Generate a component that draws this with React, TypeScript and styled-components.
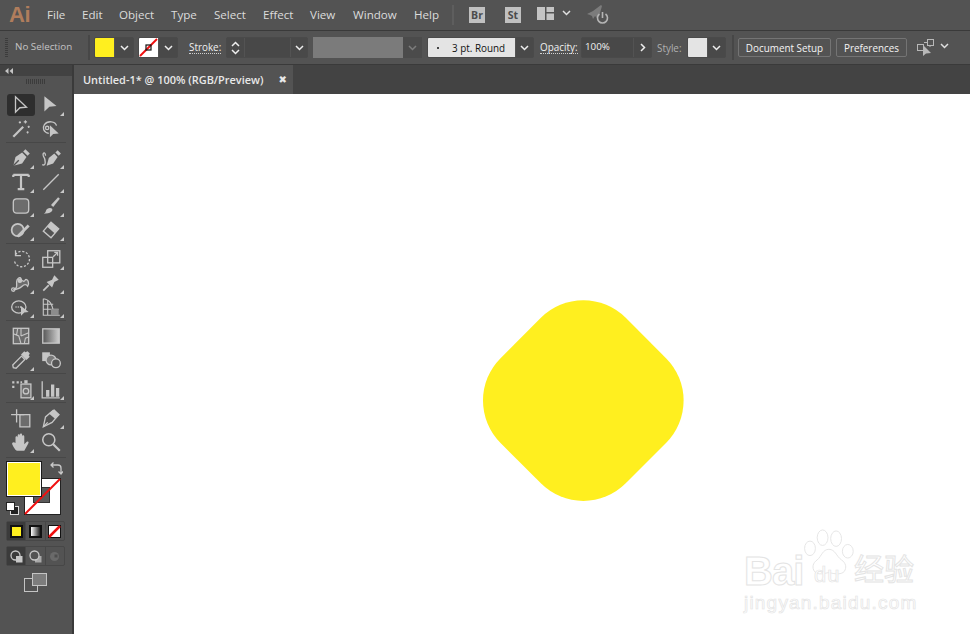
import React from "react";
import styled, { createGlobalStyle } from "styled-components";

const Global = createGlobalStyle`
  html, body { margin: 0; padding: 0; background: #535353; }
  #root { width: 970px; height: 634px; overflow: hidden; }
`;

const Shell = styled.div`
  width: 970px; height: 634px; display: flex; flex-direction: column;
  background: #535353; overflow: hidden;
  font-family: "Open Sans", "Liberation Sans", sans-serif;
`;

/* ---------- menu bar ---------- */
const MenuBar = styled.div`
  height: 30px; flex: none; display: flex; align-items: center; position: relative;
  border-bottom: 1px solid #3a3a3a; background: #535353;
`;
const Logo = styled.div`
  width: 47px; padding-left: 9px; box-sizing: border-box; color: #b07d5c;
  font: 700 22px "Liberation Sans", sans-serif; letter-spacing: -0.5px; line-height: 30px;
`;
const MenuItem = styled.span<{ $w: number }>`
  width: ${p => p.$w}px; flex: none; color: #dcdcdc; font-size: 11.6px; white-space: nowrap; margin-top: -2px;
`;
const MenuDivider = styled.div`
  width: 2px; height: 20px; background: #5e5e5e; margin: 0 15px 0 1px;
`;
const AppBadge = styled.div<{ $mr: number }>`
  width: 16px; height: 16px; margin-right: ${p => p.$mr}px; background: #c0c0c0; color: #4c4c4c;
  display: flex; align-items: center; justify-content: center;
  font: 700 10.5px "Open Sans", sans-serif;
`;

/* ---------- option bar ---------- */
const OptionBar = styled.div`
  height: 33px; flex: none; display: flex; align-items: center; position: relative;
  border-bottom: 1px solid #3a3a3a; background: #535353; box-sizing: content-box;
`;
const Grip = styled.div`
  width: 3px; height: 19px; margin: 0 7px 0 5px;
  background: repeating-linear-gradient(to bottom, #3c3c3c 0 1px, transparent 1px 2px);
`;
const NoSel = styled.span`
  width: 73px; color: #c4c4c4; font-size: 9.8px; font-weight: 400; white-space: nowrap; margin-top: -3px;
`;
const VDivider = styled.div<{ $ml?: number; $mr?: number }>`
  width: 2px; height: 25px; background: #474747;
  margin: 0 ${p => p.$mr ?? 4}px 0 ${p => p.$ml ?? 0}px; flex: none;
`;
const Group = styled.div<{ $ml?: number }>`
  height: 21px; display: flex; flex: none; box-sizing: border-box; overflow: hidden;
  border: 1px solid #4a4a4a; border-radius: 2px; margin-left: ${p => p.$ml ?? 0}px; background: #494949;
`;
const Swatch = styled.div<{ $c: string }>`
  width: 19px; height: 19px; background: ${p => p.$c}; flex: none; position: relative;
  display: flex; align-items: center; justify-content: center;
`;
const Caret = styled.div<{ $w?: number }>`
  width: ${p => p.$w ?? 19}px; flex: none; display: flex; align-items: center; justify-content: center;
  border-left: 1px solid #535353; box-sizing: border-box;
`;
const LabelSlot = styled.div<{ $ml: number; $w: number }>`
  margin-left: ${p => p.$ml}px; width: ${p => p.$w}px; flex: none; display: flex;
`;
const Label = styled.span<{ $dotted?: boolean; $dim?: boolean }>`
  font-size: 9.9px; font-weight: 400;
  color: ${p => p.$dim ? "#b0b0b0" : "#f0f0f0"}; white-space: nowrap; line-height: 12px;
  border-bottom: ${p => p.$dotted ? "1px dotted #d0d0d0" : "none"};
`;
const Spinner = styled.div`
  width: 18px; display: flex; flex-direction: column; align-items: center; justify-content: center;
  gap: 2px; border-right: 1px solid #535353; box-sizing: border-box; flex: none;
`;
const DarkField = styled.div<{ $w: number }>`
  width: ${p => p.$w}px; background: #484848; flex: none; color: #f0f0f0;
  font-size: 9.8px; padding-left: 3px; box-sizing: border-box; line-height: 18px;
`;
const ProfileBar = styled.div`
  width: 90px; height: 21px; background: #7b7b7b; flex: none; margin-left: 5px;
`;
const ProfileCaret = styled.div`
  width: 19px; height: 21px; background: #4b4b4b; display: flex; align-items: center; justify-content: center;
  flex: none; margin-right: 5px;
  & > svg { opacity: 0.3; }
`;
const BrushBox = styled.div`
  width: 87px; height: 19px; background: #e4e4e4; color: #111; font-size: 9.9px; font-weight: 400;
  display: flex; align-items: center; box-sizing: border-box; padding-left: 9px; flex: none; white-space: nowrap;
`;
const Dot = styled.span`
  width: 2px; height: 2px; border-radius: 50%; background: #111; margin-right: 13px; flex: none;
`;
const Btn = styled.div<{ $w: number; $ml: number }>`
  width: ${p => p.$w}px; height: 19px; margin-left: ${p => p.$ml}px; flex: none; box-sizing: border-box;
  border: 1px solid #747474; border-radius: 2px; color: #f4f4f4; font-size: 9.9px; font-weight: 400;
  display: flex; align-items: center; justify-content: center; white-space: nowrap;
`;

/* ---------- work area ---------- */
const Work = styled.div`
  flex: 1; display: flex; min-height: 0;
`;
const Panel = styled.div`
  width: 72px; flex: none; display: flex; flex-direction: column; background: #535353;
`;
const PanelHead = styled.div`
  height: 11px; background: #424242; flex: none; display: flex; align-items: center; padding-left: 5px;
`;
const PanelGrip = styled.div`
  height: 5px; width: 19px; margin: 3px 0 9px 26px; flex: none;
  background: repeating-linear-gradient(to right, #3c3c3c 0 1px, transparent 1px 2px);
`;
const PanelGap = styled.div`
  width: 2px; background: #3a3a3a; flex: none;
`;
const ToolRow = styled.div`
  display: grid; grid-template-columns: 30px 30px; padding-left: 6px; height: 24px; flex: none;
`;
const Tool = styled.div<{ $active?: boolean }>`
  position: relative; display: flex; align-items: center; justify-content: center;
  background: ${p => p.$active ? "#2e2e2e" : "transparent"}; border-radius: 3px; height: 22px; width: 28px; margin: 1px 0 0 1px;
`;
const Corner = styled.span`
  position: absolute; right: 1px; bottom: 0; width: 0; height: 0;
  border-style: solid; border-width: 0 0 4px 4px; border-color: transparent transparent #c8c8c8 transparent;
`;
const Rule = styled.div<{ $mt?: number }>`
  height: 1px; background: #474747; margin: ${p => p.$mt ?? 1}px 6px 3px 6px; flex: none;
`;

const ColorArea = styled.div`
  position: relative; height: 54px; margin: 0; flex: none;
`;
const FillBig = styled.div`
  position: absolute; left: 6px; top: 0; width: 36px; height: 36px; box-sizing: border-box;
  background: #ffef1f; border: 1px solid #1c1c1c; box-shadow: inset 0 0 0 1px #fff; z-index: 2;
`;
const StrokeBig = styled.svg`
  position: absolute; left: 24px; top: 17px; width: 37px; height: 37px;
`;
const SwapIcon = styled.svg`
  position: absolute; left: 50px; top: 1px; width: 13px; height: 14px;
`;
const DefaultIcon = styled.svg`
  position: absolute; left: 6px; top: 41px; width: 13px; height: 13px;
`;
const ModeRow = styled.div<{ $mt: number }>`
  display: flex; margin: ${p => p.$mt}px 0 0 6px; width: 59px; height: 20px; flex: none; box-sizing: border-box;
  border: 1px solid #474747; border-radius: 2px;
`;
const ModeCell = styled.div<{ $active?: boolean }>`
  flex: 1; display: flex; align-items: center; justify-content: center;
  background: ${p => p.$active ? "#3b3b3b" : "transparent"};
  & + & { border-left: 1px solid #474747; }
`;
const ModeSwatch = styled.div<{ $bg: string }>`
  width: 13px; height: 13px; box-sizing: border-box; border: 2px solid #111; background: ${p => p.$bg};
`;
const ScreenIcon = styled.svg`
  margin: 7px 0 0 24px; width: 24px; height: 19px; flex: none;
`;

const Doc = styled.div`
  flex: 1; display: flex; flex-direction: column; min-width: 0; background: #434343;
`;
const TabBar = styled.div`
  height: 29px; flex: none; display: flex; background: #434343;
`;
const Tab = styled.div`
  width: 219px; background: #535353; display: flex; align-items: center; justify-content: space-between;
  padding: 0 6px 0 9px; box-sizing: border-box; color: #e8e8e8; font-size: 10.95px; font-weight: 600; white-space: nowrap;
`;
const Close = styled.span`
  color: #e8e8e8; font: 700 10px "DejaVu Sans", sans-serif; margin-top: -1px;
`;
const Canvas = styled.div`
  flex: 1; background: #fff; position: relative; overflow: hidden;
`;
const Shape = styled.div`
  position: absolute; left: 420.7px; top: 217.7px; width: 176.6px; height: 176.6px;
  background: #ffef1f; border-radius: 60px; transform: rotate(45deg);
`;
const Mark = styled.div`
  position: absolute; left: 670px; top: 425px; width: 190px; height: 110px;
  color: #fff; -webkit-text-stroke: 1px #e4e4e4; font-family: "Liberation Sans", "Noto Sans CJK SC", sans-serif;
`;
const MarkBai = styled.span`
  position: absolute; left: 0; top: 32px; font-size: 40px; font-weight: 700; letter-spacing: -1px; line-height: 40px;
`;
const MarkJing = styled.span`
  position: absolute; left: 0; top: 73px; font-size: 19px; line-height: 22px; white-space: nowrap; letter-spacing: 1.2px; -webkit-text-stroke: 0.7px #e4e4e4;
`;
const MarkCn = styled.span`
  position: absolute; left: 110px; top: 35px; font-size: 30px; line-height: 32px; white-space: nowrap;
`;
const MarkDu = styled.span`
  position: absolute; left: 70px; top: 46px; font-size: 22px; line-height: 20px; letter-spacing: 1px; -webkit-text-stroke: 0.7px #e4e4e4;
`;
const MarkPaw = styled.svg`
  position: absolute; left: 57px; top: 10px; width: 54px; height: 58px;
`;

/* ---------- icons ---------- */
const G = "#c6c6c6";
const Ico: React.FC<{ children: React.ReactNode }> = ({ children }) => (
  <svg width="22" height="22" viewBox="0 0 20 20" fill="none" stroke={G} strokeWidth="1.2">{children}</svg>
);
const Chev = () => (
  <svg width="9" height="6" viewBox="0 0 9 6" fill="none" stroke="#eeeeee" strokeWidth="1.5"><path d="M1 1l3.5 3.5L8 1" /></svg>
);
const ChevUp = () => (
  <svg width="9" height="6" viewBox="0 0 9 6" fill="none" stroke="#eeeeee" strokeWidth="1.5"><path d="M1 5l3.5-3.5L8 5" /></svg>
);
const ChevRight = () => (
  <svg width="6" height="9" viewBox="0 0 6 9" fill="none" stroke="#eeeeee" strokeWidth="1.5"><path d="M1 1l3.5 3.5L1 8" /></svg>
);

const tools: React.ReactNode[][] = [
  [
    <Ico><path d="M5 2.5v14l4-4 6-.5z" /></Ico>,
    <Ico><path d="M4 2v14l4.5-4.5 6.5-.5z" fill={G} stroke="none" /></Ico>,
  ],
  [
    <Ico><path d="M3 17l9-9" strokeWidth="2" /><path d="M14 2v3M12.5 3.5h3M17 7v2M16 8h2M9 3v2M8 4h2M16 12v2M15 13h2" strokeWidth="1" /></Ico>,
    <Ico><path d="M8 14c-5-1-6-5-4-8 3-4 10-3 11 1" /><circle cx="6.500" cy="9" r="1.500" /><path d="M9 6.500v11l3-3 5-.5z" fill={G} stroke="none" /></Ico>,
  ],
];
const tools2: React.ReactNode[][] = [
  [
    <Ico><path d="M3 17l2-8 6-4 4 4-4 6z" fill={G} stroke="none" /><path d="M12 4l2-2 4 4-2 2z" fill={G} stroke="none" /><path d="M3 17l5-5" stroke="#535353" /></Ico>,
    <Ico><path d="M2 16c4 2 3-5 1-8-1-3 2-4 2 0" /><path d="M6 17l2-7 5-4 3 3-4 6z" fill={G} stroke="none" /><path d="M14 5l2-2 3 3-2 2z" fill={G} stroke="none" /></Ico>,
  ],
  [
    <Ico><path d="M3 3.500h14M10 3.500v13M7 16.500h6M3 3.500v2M17 3.500v2" strokeWidth="2" /></Ico>,
    <Ico><path d="M3 17L17 3" /></Ico>,
  ],
  [
    <Ico><rect x="3" y="3.500" width="14" height="13" rx="3" fill="#6c6c6c" /></Ico>,
    <Ico><path d="M10 9L16.500 2l1.500 1.500-6 7.500z" fill={G} stroke="none" /><path d="M3 17c1 0 2-1 2.500-3 .5-2 4-3 5.500-1.500 1 2-1 4.500-8 4.500z" fill={G} stroke="none" /></Ico>,
  ],
  [
    <Ico><circle cx="7" cy="10" r="5.500" fill="#6c6c6c" strokeWidth="1.600" /><path d="M7 16L17 6" strokeWidth="2.600" /></Ico>,
    <Ico><path d="M3 11l7-8 7 6-7 8z" stroke={G} /><path d="M6.500 7l7 6.200 3.500-4-7-6.200z" fill={G} stroke="none" /></Ico>,
  ],
];
const tools3: React.ReactNode[][] = [
  [
    <Ico><path d="M5 6a7 7 0 1 1-1 6" strokeDasharray="2 1.500" /><path d="M5 2v5h5" /></Ico>,
    <Ico><rect x="2.500" y="8.500" width="9" height="9" /><rect x="7" y="2.500" width="11" height="11" /><path d="M12 8l4-4M13 4h3v3" /></Ico>,
  ],
  [
    <Ico><path d="M3 16c4-1 3-4 3-7 0-3 3-5 4-3 1 3 3 3 4 1 2-1 4 3 2 6-1-2-3-2-5 0-2 2-4 3-8 3z" fill="#6c6c6c" /><circle cx="3" cy="16" r="1.500" /><circle cx="9" cy="8" r="1.500" fill={G} /></Ico>,
    <Ico><path d="M3 17l5-5" strokeWidth="1.500" /><path d="M6 9l5-2 2-4 4 4-4 2-2 5z" fill={G} stroke="none" /></Ico>,
  ],
  [
    <Ico><ellipse cx="8" cy="10" rx="6.500" ry="5.500" /><path d="M5 10h6" strokeDasharray="1 1" /><path d="M10 9v9l3-3 4-.5z" fill={G} stroke="none" /></Ico>,
    <Ico><path d="M3 2.500v15h15M3 2.500c6 1 8 4 10 15M3 7.500l9 0M3 12h14M7 4v13" strokeWidth="1" /><path d="M10 12h7v5.500h-7z" fill="#8c8c8c" stroke="none" /></Ico>,
  ],
];
const tools4: React.ReactNode[][] = [
  [
    <Ico><rect x="3" y="3" width="14" height="14" fill="#6c6c6c" /><path d="M3 8l5 2 2 7M17 7l-7 3M10 3v7M7 3l-1 6M13 17l1-5 3-1" strokeWidth="1" /></Ico>,
    <Ico><defs><linearGradient id="gr"><stop offset="0" stopColor="#555" /><stop offset="1" stopColor="#d0d0d0" /></linearGradient></defs><rect x="2.500" y="3.500" width="15" height="13" fill="url(#gr)" stroke={G} /></Ico>,
  ],
  [
    <Ico><path d="M3 17l-.5-2.500 8-8 3 3-8 8z" /><path d="M10 5l3-3 1 1 2-1 2 2-1 2 1 1-3 3z" fill={G} stroke="none" /></Ico>,
    <Ico><path d="M2 3h7v8H2z" fill={G} stroke="none" /><circle cx="10" cy="10" r="4.500" fill="#7a7a7a" /><circle cx="14.500" cy="13" r="4" fill="#535353" /></Ico>,
  ],
];
const tools5: React.ReactNode[][] = [
  [
    <Ico><path d="M2 3h2v2H2zM6 3h2v2H6zM2 7h2v2H2zM9.500 3h1.500v1.500H9.500z" fill={G} stroke="none" /><path d="M13 2h3v3h-3z" fill={G} stroke="none" /><rect x="10" y="5.500" width="9" height="12.500" fill="#6c6c6c" /><circle cx="14.500" cy="12" r="2.500" /></Ico>,
    <Ico><path d="M2 3v15h16" /><path d="M5.500 11h3v6h-3zM10 6h3v11h-3zM14.500 9h3v8h-3z" fill={G} stroke="none" /></Ico>,
  ],
];
const tools6: React.ReactNode[][] = [
  [
    <Ico><path d="M9 7h9v11H9z" fill="#6c6c6c" stroke={G} /><path d="M1 7h12M6 2v12" /></Ico>,
    <Ico><path d="M3 18l2-9 7-6 5 4-6 7z" /><path d="M8 6l5-4 5 5-4 4z" fill={G} stroke="none" /><path d="M3 18l4-4" /></Ico>,
  ],
  [
    <Ico><path d="M5 11V6c0-1.500 2-1.500 2 0V4c0-1.500 2-1.500 2 0v-.500c0-1.500 2-1.500 2 0V5c0-1.500 2-1.500 2 0v7l2-2c1.500-1 2.500 0 1.500 1.500L13 18H7c-2 0-3.500-3-5-6-.5-1.500 1.500-2.500 3-1z" fill={G} stroke="none" /></Ico>,
    <Ico><circle cx="8" cy="8" r="5.500" strokeWidth="1.400" /><path d="M12 12l6 6" strokeWidth="2" /></Ico>,
  ],
];

const Rows: React.FC<{ rows: React.ReactNode[][]; first?: boolean; noCorner?: string[] }> = ({ rows, first, noCorner }) => (
  <>
    {rows.map((row, i) => (
      <ToolRow key={i}>
        {row.map((icon, j) => (
          <Tool key={j} $active={!!first && i === 0 && j === 0}>
            {icon}
            {!(noCorner && noCorner.includes(`${i}-${j}`)) && <Corner />}
          </Tool>
        ))}
      </ToolRow>
    ))}
  </>
);

const menu: [string, number][] = [
  ["File", 35], ["Edit", 37], ["Object", 52], ["Type", 43], ["Select", 49], ["Effect", 47],
  ["View", 43], ["Window", 61], ["Help", 37],
];

export default function App() {
  return (
    <Shell>
      <Global />
      <MenuBar>
        <Logo>Ai</Logo>
        {menu.map(([t, w]) => <MenuItem key={t} $w={w}>{t}</MenuItem>)}
        <MenuDivider />
        <AppBadge $mr={20}>Br</AppBadge>
        <AppBadge $mr={16}>St</AppBadge>
        <svg width="17" height="13" viewBox="0 0 17 13" fill="#c4c4c4" style={{ marginTop: -4 }}>
          <path d="M0 0h8v13H0zM9.500 0H17v5H9.500zM9.500 6.500H17V13H9.500z" />
        </svg>
        <svg width="9" height="6" viewBox="0 0 9 6" fill="none" stroke="#e0e0e0" strokeWidth="1.500" style={{ margin: "-4px 16px 0 8px" }}><path d="M1 1l3.500 3.500L8 1" /></svg>
        <svg width="23" height="20" viewBox="0 0 23 20" fill="none">
          <path d="M0 9l6-3 8-6 1 1-2 7-3 5-2-2-2 3-1-3-2-1z" fill="#7c7c7c" />
          <path d="M12.500 9a5 5 0 1 0 6 0M15.500 7v6" stroke="#b4b4b4" strokeWidth="1.600" />
        </svg>
      </MenuBar>

      <OptionBar>
        <Grip />
        <NoSel>No Selection</NoSel>
        <VDivider />
        <Group>
          <Swatch $c="#ffef1f" />
          <Caret><Chev /></Caret>
        </Group>
        <Group $ml={4}>
          <Swatch $c="#fff">
            <svg width="19" height="19" viewBox="0 0 19 19"><path d="M1 18L18 1" stroke="#f01010" strokeWidth="2" /><rect x="7" y="7" width="5" height="5" fill="none" stroke="#111" strokeWidth="1.200" /></svg>
          </Swatch>
          <Caret><Chev /></Caret>
        </Group>
        <LabelSlot $ml={11} $w={37}><Label $dotted>Stroke:</Label></LabelSlot>
        <Group>
          <Spinner><ChevUp /><Chev /></Spinner>
          <DarkField $w={45} />
          <Caret $w={17}><Chev /></Caret>
        </Group>
        <ProfileBar />
        <ProfileCaret><Chev /></ProfileCaret>
        <Group>
          <BrushBox><Dot />3 pt. Round</BrushBox>
          <Caret $w={18}><Chev /></Caret>
        </Group>
        <LabelSlot $ml={6} $w={41}><Label $dotted>Opacity:</Label></LabelSlot>
        <Group>
          <DarkField $w={51}>100%</DarkField>
          <Caret $w={18}><ChevRight /></Caret>
        </Group>
        <LabelSlot $ml={5} $w={30}><Label $dim>Style:</Label></LabelSlot>
        <Group>
          <Swatch $c="#e4e4e4" />
          <Caret $w={18}><Chev /></Caret>
        </Group>
        <VDivider $ml={6} $mr={0} />
        <Btn $w={93} $ml={4}>Document Setup</Btn>
        <Btn $w={71} $ml={5}>Preferences</Btn>
        <svg width="18" height="18" viewBox="0 0 18 18" fill="none" stroke="#b8b8b8" style={{ marginLeft: 10 }}>
          <rect x="10.500" y="0.500" width="6" height="6" /><rect x="0.500" y="5.500" width="6" height="6" />
          <path d="M7 3.500h3M13 7v1" /><path d="M6 6v11l3-2.500 5-.5z" fill="#b8b8b8" stroke="none" />
        </svg>
        <svg width="9" height="6" viewBox="0 0 9 6" fill="none" stroke="#e0e0e0" strokeWidth="1.500" style={{ marginLeft: 5, marginTop: -4 }}><path d="M1 1l3.500 3.500L8 1" /></svg>
      </OptionBar>

      <Work>
        <Panel>
          <PanelHead>
            <svg width="8" height="6" viewBox="0 0 8 6" fill="#c4c4c4"><path d="M3.500 0v6L0 3zM8 0v6L4.500 3z" /></svg>
          </PanelHead>
          <PanelGrip />
          <Rows rows={tools} first noCorner={["0-0", "1-0", "1-1"]} />
          <Rule />
          <Rows rows={tools2} />
          <Rule />
          <Rows rows={tools3} />
          <Rule />
          <Rows rows={tools4} noCorner={["0-0", "0-1", "1-1"]} />
          <Rule />
          <Rows rows={tools5} />
          <Rule />
          <Rows rows={tools6} noCorner={["0-0", "1-1"]} />
          <Rule $mt={3} />
          <ColorArea>
            <FillBig />
            <StrokeBig viewBox="0 0 37 37">
              <rect x="0.500" y="0.500" width="36" height="36" fill="#fff" stroke="#222" />
              <rect x="9.500" y="9.500" width="16" height="15" fill="#5a5a5a" stroke="#333" />
              <path d="M1 36L36 1" stroke="#f01010" strokeWidth="2" />
            </StrokeBig>
            <SwapIcon viewBox="0 0 13 14" fill="none" stroke="#c8c8c8" strokeWidth="1.300">
              <path d="M1 3h7q3 0 3 3v6M3.500 .5L1 3l2.500 2.500M8.500 9.500L11 12l2-2.500" />
            </SwapIcon>
            <DefaultIcon viewBox="0 0 13 13">
              <rect x="4.500" y="4.500" width="8" height="8" fill="#222" stroke="#ddd" />
              <rect x="0.500" y="0.500" width="8" height="8" fill="#fff" stroke="#222" />
            </DefaultIcon>
          </ColorArea>
          <ModeRow $mt={6}>
            <ModeCell $active><ModeSwatch $bg="#ffef1f" /></ModeCell>
            <ModeCell><ModeSwatch $bg="linear-gradient(to right,#fff,#222)" /></ModeCell>
            <ModeCell>
              <svg width="13" height="13" viewBox="0 0 13 13"><rect width="13" height="13" fill="#fff" stroke="#111" strokeWidth="2" /><path d="M1 12L12 1" stroke="#f01010" strokeWidth="2.500" /></svg>
            </ModeCell>
          </ModeRow>
          <ModeRow $mt={5}>
            <ModeCell $active>
              <svg width="13" height="13" viewBox="0 0 13 13"><circle cx="5.500" cy="5.500" r="4.500" fill="none" stroke="#c8c8c8" strokeWidth="1.300" /><rect x="6" y="6" width="6.500" height="6.500" fill="#c8c8c8" /></svg>
            </ModeCell>
            <ModeCell>
              <svg width="13" height="13" viewBox="0 0 13 13"><rect x="6" y="6" width="6.500" height="6.500" fill="#a8a8a8" /><circle cx="5.500" cy="5.500" r="4.500" fill="#535353" stroke="#c8c8c8" strokeWidth="1.300" /></svg>
            </ModeCell>
            <ModeCell>
              <svg width="11" height="11" viewBox="0 0 11 11"><circle cx="5.500" cy="5.500" r="4.500" fill="#6a6a6a" /><rect x="5.500" y="3.500" width="3" height="3" fill="#4e4e4e" /></svg>
            </ModeCell>
          </ModeRow>
          <ScreenIcon viewBox="0 0 24 19">
            <rect x="0.500" y="5.500" width="13" height="13" fill="#535353" stroke="#c4c4c4" />
            <rect x="8.500" y="0.500" width="14" height="12" fill="#7d7d7d" stroke="#c4c4c4" />
          </ScreenIcon>
        </Panel>
        <PanelGap />
        <Doc>
          <TabBar>
            <Tab>Untitled-1* @ 100% (RGB/Preview)<Close>✖</Close></Tab>
          </TabBar>
          <Canvas>
            <Shape />
            <Mark>
              <MarkBai>Bai</MarkBai>
              <MarkPaw viewBox="0 0 60 60" preserveAspectRatio="none" fill="#fff" stroke="#e4e4e4" strokeWidth="1">
                <ellipse cx="24" cy="9" rx="6" ry="8" />
                <ellipse cx="39" cy="10" rx="6" ry="8" />
                <ellipse cx="10" cy="20" rx="6" ry="7.500" />
                <ellipse cx="52" cy="23" rx="6" ry="7" />
                <path d="M31 21c-7 0-8 7-13 11-5 3-6 8-3 12 3 3 7 3 16 1 8 2 14 2 17-1 3-4 2-9-3-12-6-4-7-11-14-11z" />
              </MarkPaw>
              <MarkDu>du</MarkDu>
              <MarkCn>经验</MarkCn>
              <MarkJing>jingyan.baidu.com</MarkJing>
            </Mark>
          </Canvas>
        </Doc>
      </Work>
    </Shell>
  );
}
